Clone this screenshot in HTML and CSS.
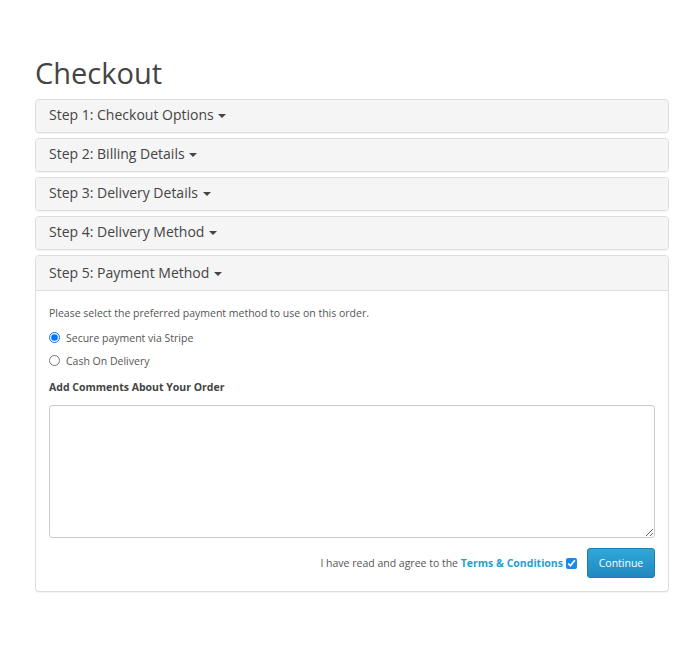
FILE: index.html
```html
<!DOCTYPE html>
<html lang="en">

<head>
    <meta charset="UTF-8">
    <meta name="viewport" content="width=device-width, initial-scale=1.0">
    <title>Checkout</title>
    <link rel="stylesheet" href="styles.css">
</head>

<body>
    <div class="container">
        <h1>Checkout</h1>
        <div class="panel">
            <div class="panel-heading">Step 1: Checkout Options <span class="caret"></span></div>
        </div>
        <div class="panel">
            <div class="panel-heading">Step 2: Billing Details <span class="caret"></span></div>
        </div>
        <div class="panel">
            <div class="panel-heading">Step 3: Delivery Details <span class="caret"></span></div>
        </div>
        <div class="panel">
            <div class="panel-heading">Step 4: Delivery Method <span class="caret"></span></div>
        </div>
        <div class="panel">
            <div class="panel-heading">Step 5: Payment Method <span class="caret"></span></div>
            <div class="panel-body">
                <p class="intro">Please select the preferred payment method to use on this order.</p>
                <label class="radio"><input type="radio" name="payment" checked> Secure payment via Stripe</label>
                <label class="radio"><input type="radio" name="payment"> Cash On Delivery</label>
                <p class="comments">Add Comments About Your Order</p>
                <textarea name="comment"></textarea>
                <div class="buttons">
                    <span class="agree">I have read and agree to the <a href="#">Terms &amp; Conditions</a></span>
                    <input type="checkbox" name="agree" checked>
                    <button type="button" class="btn">Continue</button>
                </div>
            </div>
        </div>
    </div>
</body>

</html>
```

FILE: styles.css
```css
* {
    margin: 0;
    padding: 0;
    box-sizing: border-box;
}

body {
    background-color: #fff;
    font-family: "Open Sans", "Liberation Sans", sans-serif;
    color: #555;
}

.container {
    width: 634px;
    margin: 0 auto 0 35px;
    padding-top: 56px;
}

.container h1 {
    font-size: 29px;
    font-weight: 400;
    color: #444;
    line-height: 34px;
    margin-bottom: 9px;
}

.panel {
    border: 1px solid #ddd;
    border-radius: 4px;
    margin-bottom: 5px;
    background-color: #fff;
    box-shadow: 0 1px 1px rgba(0, 0, 0, .05);
}

.panel-heading {
    background-color: #f5f5f5;
    padding: 0 13px;
    height: 32px;
    line-height: 30px;
    font-size: 14px;
    color: #444;
    border-radius: 3px;
}

.panel:last-child .panel-heading {
    height: 35px;
    line-height: 33px;
    border-bottom: 1px solid #ddd;
    border-radius: 3px 3px 0 0;
}

.caret {
    display: inline-block;
    width: 0;
    height: 0;
    border-top: 4px solid #444;
    border-left: 4px solid transparent;
    border-right: 4px solid transparent;
    vertical-align: middle;
    margin-left: 1px;
}

.panel-body {
    padding: 15px 13px 13px;
    font-size: 10.5px;
}

.intro {
    margin-bottom: 6px;
}

.radio {
    display: flex;
    align-items: center;
    gap: 6px;
    height: 23px;
}

.radio input {
    width: 11px;
    height: 11px;
    margin: 0;
}

.comments {
    font-weight: 700;
    color: #444;
    margin-top: 8px;
    margin-bottom: 11px;
}

textarea {
    display: block;
    width: 100%;
    height: 133px;
    border: 1px solid #ccc;
    border-radius: 3px;
    resize: vertical;
}

.buttons {
    display: flex;
    justify-content: flex-end;
    align-items: center;
    margin-top: 10px;
}

.agree a {
    color: #23a1d1;
    font-weight: 700;
    text-decoration: none;
}

.buttons input {
    width: 11px;
    height: 11px;
    margin: 0 10px 0 3px;
    accent-color: #1e88e5;
}

.btn {
    font-family: inherit;
    font-size: 10.5px;
    color: #fff;
    background-color: #2a9fd6;
    background-image: linear-gradient(#2fa8d8, #2188c0);
    border: 1px solid #1f7eb0;
    border-radius: 3px;
    width: 68px;
    height: 30px;
}
```
